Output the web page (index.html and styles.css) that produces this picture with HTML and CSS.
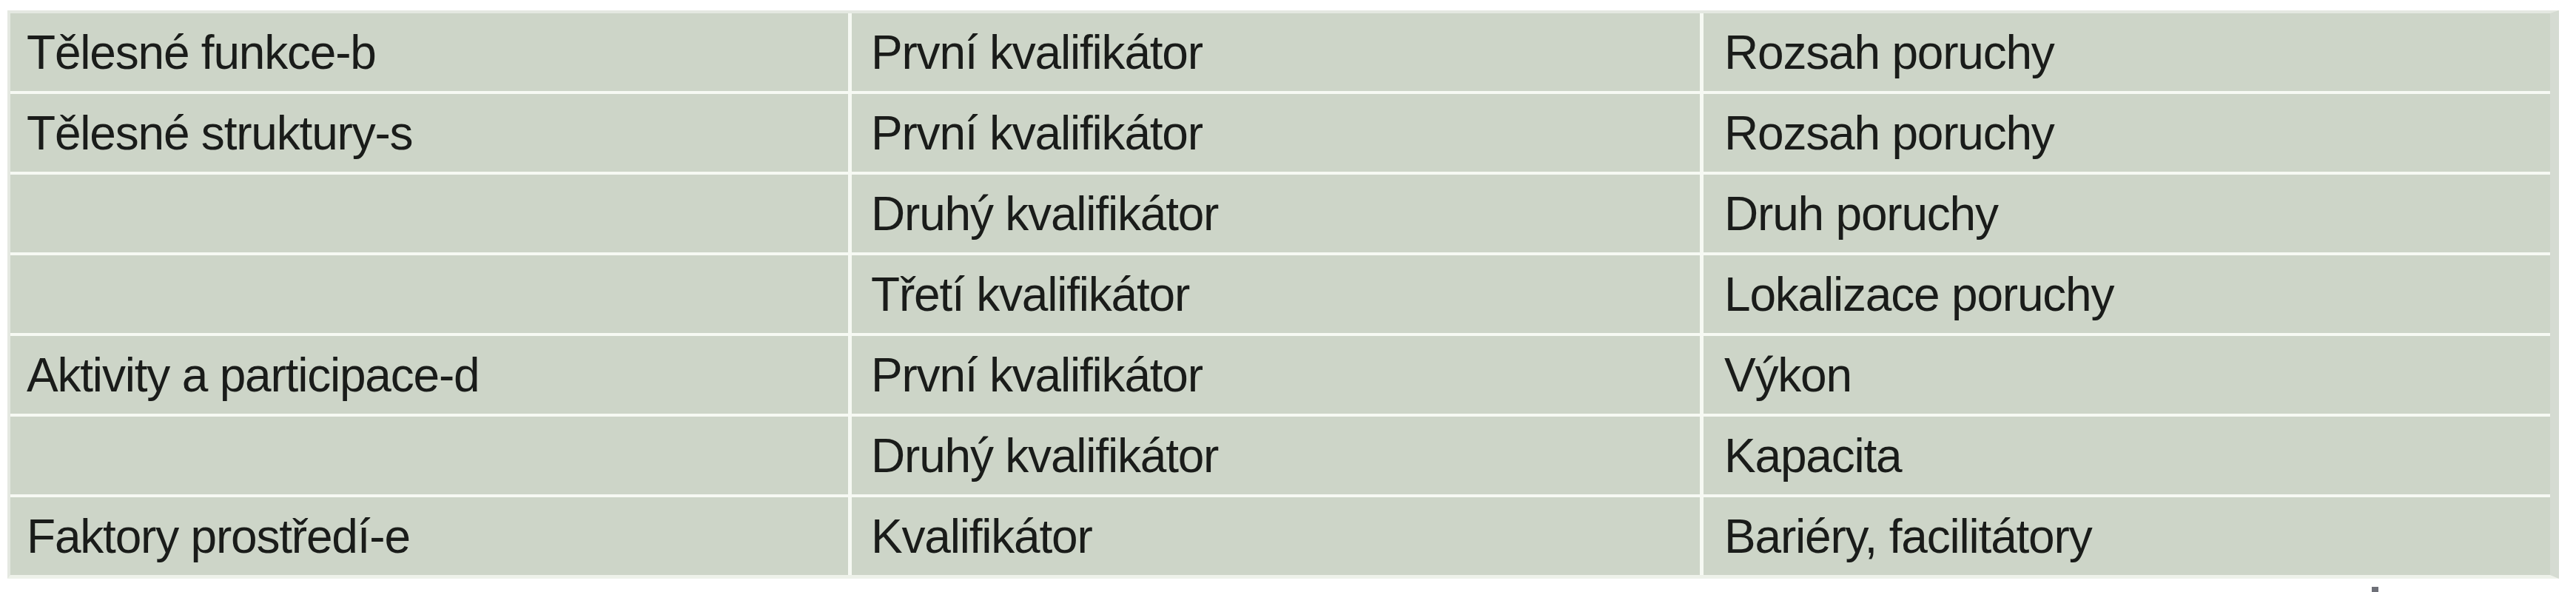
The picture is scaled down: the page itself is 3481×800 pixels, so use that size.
FILE: index.html
```html
<!DOCTYPE html>
<html lang="cs">
<head>
<meta charset="utf-8">
<title>Kvalifikátory</title>
<link rel="stylesheet" href="styles.css">
</head>
<body>
<div class="page">
  <div class="grid">
    <div class="cell c1">Tělesné funkce-b</div>
    <div class="cell c2">První kvalifikátor</div>
    <div class="cell c3">Rozsah poruchy</div>

    <div class="cell c1">Tělesné struktury-s</div>
    <div class="cell c2">První kvalifikátor</div>
    <div class="cell c3">Rozsah poruchy</div>

    <div class="cell c1"></div>
    <div class="cell c2">Druhý kvalifikátor</div>
    <div class="cell c3">Druh poruchy</div>

    <div class="cell c1"></div>
    <div class="cell c2">Třetí kvalifikátor</div>
    <div class="cell c3">Lokalizace poruchy</div>

    <div class="cell c1">Aktivity a participace-d</div>
    <div class="cell c2">První kvalifikátor</div>
    <div class="cell c3">Výkon</div>

    <div class="cell c1"></div>
    <div class="cell c2">Druhý kvalifikátor</div>
    <div class="cell c3">Kapacita</div>

    <div class="cell c1">Faktory prostředí-e</div>
    <div class="cell c2">Kvalifikátor</div>
    <div class="cell c3">Bariéry, facilitátory</div>
  </div>
  <span class="mark"></span>
</div>
</body>
</html>
```

FILE: styles.css
```css
html, body {
  margin: 0;
  padding: 0;
  background: #ffffff;
}

.page {
  position: relative;
  width: 3481px;
  height: 800px;
  padding-top: 14px;
  padding-left: 10px;
  box-sizing: border-box;
}

.grid {
  display: grid;
  grid-template-columns: 1132px 1146px 1144px;
  grid-auto-rows: 105px;
  column-gap: 5px;
  row-gap: 4px;
  width: max-content;
  background: #f6f9f3;
  border-left: 4px solid #e4e8e1;
  border-top: 4px solid #e4e8e1;
  border-right: 12px solid #d5dbd2;
  border-bottom: 5px solid #eef2ea;
}

.cell {
  background: #cdd5c8;
  display: flex;
  align-items: center;
  font-family: "Liberation Sans", Arial, sans-serif;
  font-size: 64px;
  letter-spacing: -1.2px;
  color: #1a1c1a;
  white-space: nowrap;
}

.c1 { padding-left: 22px; }
.c2 { padding-left: 26px; }
.c3 { padding-left: 28px; }

.mark {
  position: absolute;
  left: 3205px;
  top: 793px;
  width: 9px;
  height: 7px;
  background: #6e7078;
}
```
